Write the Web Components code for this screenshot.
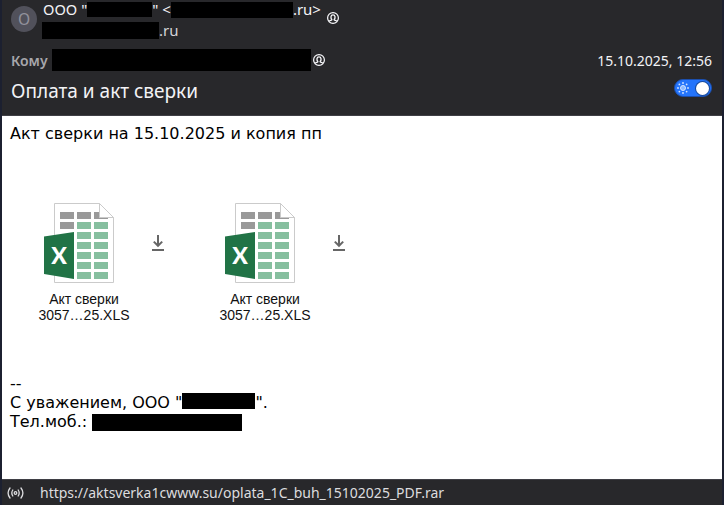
<!DOCTYPE html>
<html lang="ru">
<head>
<meta charset="utf-8">
<title>Оплата и акт сверки</title>
<style>
html, body {
    height: 100%;
    margin: 0;
}
</style>
</head>
<body>
<mail-window></mail-window>
<script>
// black-out, width and height from attributes
class redactedText extends HTMLElement {
    constructor() {
        super()
        this.attachShadow({mode:"open"})
        this.shadowRoot.innerHTML=`
        <style>
        :host {
            display: inline-block;
            flex: none;
            background: #000;
            vertical-align: middle;
        }
        </style>`
    }

    connectedCallback(){
        this.style.width=`${this.getAttribute('w')}px`
        this.style.height=`${this.getAttribute('h')}px`
    }
}
window.customElements.define('redacted-text', redactedText)


class contactIcon extends HTMLElement {
    constructor() {
        super()
        this.attachShadow({mode:"open"})
        this.shadowRoot.innerHTML=`
        <style>
        :host {
            display: block;
            flex: none;
            width: 12px;
            height: 12px;
        }
        button {
            display: block;
            padding: 0;
            border: 0;
            background: none;
            color: #fbfbfe;
        }
        svg {
            display: block;
        }
        </style>
        <button type="button" aria-label="Контакт">
            <svg width="12" height="12" viewBox="0 0 12 12" fill="none" stroke="currentColor">
                <circle cx="6" cy="6" r="5.4" stroke-width="1.2"></circle>
                <path d="M2.2 9.3 C3 8.3 4.9 8.6 4.9 7.6 C3.3 5.8 3.7 2.8 6 2.8 C8.3 2.8 8.7 5.8 7.1 7.6 C7.1 8.6 9 8.3 9.8 9.3" stroke-width="1.3"></path>
            </svg>
        </button>`
    }
}
window.customElements.define('contact-icon', contactIcon)


class themeSwitch extends HTMLElement {
    constructor() {
        super()
        this.attachShadow({mode:"open"})
        this.shadowRoot.innerHTML=`
        <style>
        :host {
            display: block;
        }
        button {
            display: flex;
            align-items: center;
            justify-content: space-between;
            box-sizing: border-box;
            width: 38px;
            height: 18px;
            padding: 0 2px;
            border: 1px solid #1c4fae;
            border-radius: 9px;
            background: #2474fb;
        }
        span {
            width: 13px;
            height: 13px;
            border-radius: 50%;
            background: #fff;
            box-shadow: 0 0 0 1px #174a9c;
        }
        </style>
        <button type="button" role="switch" aria-checked="true" aria-label="Светлая тема">
            <svg width="12" height="12" viewBox="0 0 12 12" fill="#d5e5ff">
                <circle cx="6" cy="6" r="2.5" fill="#8cb9ff" stroke="#d5e5ff"></circle>
                <circle cx="6" cy="1" r="0.9"></circle>
                <circle cx="6" cy="11" r="0.9"></circle>
                <circle cx="1" cy="6" r="0.9"></circle>
                <circle cx="11" cy="6" r="0.9"></circle>
                <circle cx="2.4" cy="2.4" r="0.9"></circle>
                <circle cx="9.6" cy="2.4" r="0.9"></circle>
                <circle cx="2.4" cy="9.6" r="0.9"></circle>
                <circle cx="9.6" cy="9.6" r="0.9"></circle>
            </svg>
            <span></span>
        </button>`
        this.shadowRoot.querySelector('button').addEventListener('click',(e)=>{
            const on=e.currentTarget.getAttribute('aria-checked')==='true'
            e.currentTarget.setAttribute('aria-checked',String(!on))
        })
    }
}
window.customElements.define('theme-switch', themeSwitch)


class mailHeader extends HTMLElement {
    constructor() {
        super()
        this.attachShadow({mode:"open"})
        this.shadowRoot.innerHTML=`
        <style>
        :host {
            display: block;
            padding: 0 10px 13px;
            border-bottom: 1px solid #3f3f45;
            background: #28282b;
            color: #f3f3f6;
        }
        .from, .to, .subject, .line {
            display: flex;
            align-items: center;
        }
        .from {
            height: 40px;
            font-size: 15px;
        }
        .avatar {
            flex: none;
            width: 26px;
            margin: 0 5px 2px 0;
            border-radius: 50%;
            background: #51515b;
            color: #91919c;
            font-size: 16px;
            line-height: 26px;
            text-align: center;
        }
        .line {
            height: 21px;
        }
        .addr {
            color: #d4d4d8;
        }
        .name {
            padding-left: 1px;
        }
        .from contact-icon {
            margin: 0 0 4px 6px;
        }
        .to {
            height: 40px;
            gap: 2px;
        }
        .to b {
            margin-right: 2px;
            color: #a7a7ab;
            font-weight: 600;
        }
        time {
            margin-left: auto;
        }
        .subject {
            justify-content: space-between;
            height: 22px;
        }
        h1 {
            margin: 0;
            font-size: 19px;
            font-weight: 400;
            line-height: 22px;
        }
        theme-switch {
            margin-bottom: 6px;
        }
        </style>
        <div class="from">
            <div class="avatar">О</div>
            <div>
                <div class="line name">ООО "<redacted-text w="65" h="15"></redacted-text>"&nbsp;&lt;<redacted-text w="122" h="16"></redacted-text>.ru&gt;</div>
                <div class="line addr"><redacted-text w="117" h="17"></redacted-text>.ru</div>
            </div>
            <contact-icon></contact-icon>
        </div>
        <div class="to">
            <b>Кому</b>
            <redacted-text w="259" h="22"></redacted-text>
            <contact-icon></contact-icon>
            <time datetime="2025-10-15T12:56">15.10.2025, 12:56</time>
        </div>
        <div class="subject">
            <h1>Оплата и акт сверки</h1>
            <theme-switch></theme-switch>
        </div>`
    }
}
window.customElements.define('mail-header', mailHeader)


class attachedFile extends HTMLElement {
    constructor() {
        super()
        this.attachShadow({mode:"open"})
        this.shadowRoot.innerHTML=`
        <style>
        :host {
            display: flex;
            align-items: flex-start;
        }
        figure {
            display: flex;
            flex-direction: column;
            align-items: center;
            gap: 8px;
            width: 120px;
            margin: 0;
        }
        svg {
            display: block;
        }
        figure svg {
            margin-right: 10px;
        }
        figcaption {
            color: #111;
            font: 14px/16px "Liberation Sans", Arial, sans-serif;
            text-align: center;
        }
        button {
            display: flex;
            align-items: center;
            justify-content: center;
            width: 28px;
            height: 80px;
            padding: 0;
            border: 0;
            background: none;
        }
        </style>
        <figure>
            <svg width="70" height="80" viewBox="0 0 70 80">
                <path d="M10.5 0.5 H55.5 L69.5 14.5 V79.5 H10.5 Z" fill="#fff" stroke="#cbcbcb"></path>
                <path d="M16 9h14v7h-14z M33 9h14v7h-14z M50 9h14v7h-14z M16 19h14v7h-14z" fill="#999"></path>
                <g fill="#86bf9f">
                    <path d="M33 19h14v7h-14z M33 29h14v7h-14z M33 39h14v7h-14z M33 49h14v7h-14z M33 59h14v7h-14z M33 69h14v7h-14z"></path>
                    <path d="M50 19h14v7h-14z M50 29h14v7h-14z M50 39h14v7h-14z M50 49h14v7h-14z M50 59h14v7h-14z M50 69h14v7h-14z"></path>
                </g>
                <path d="M55.5 0.5 L69.5 14.5 H55.5 Z" fill="#fff" stroke="#cbcbcb"></path>
                <path d="M0 33.5 L30 29 V76 L0 71 Z" fill="#217346"></path>
                <text x="15" y="61" fill="#fff" font-family="Lato, sans-serif" font-size="23" font-weight="900" text-anchor="middle">X</text>
            </svg>
            <figcaption><slot></slot></figcaption>
        </figure>
        <button type="button" aria-label="Скачать">
            <svg width="12" height="16" viewBox="0 0 12 16" fill="none" stroke="#666" stroke-width="2">
                <path d="M6 0 V11 M1.8 6.6 L6 10.8 L10.2 6.6 M0 15 H12"></path>
            </svg>
        </button>`
    }
}
window.customElements.define('attached-file', attachedFile)


class mailBody extends HTMLElement {
    constructor() {
        super()
        this.attachShadow({mode:"open"})
        this.shadowRoot.innerHTML=`
        <style>
        :host {
            display: block;
            flex: 1;
            padding: 8px;
            background: #fff;
            color: #000;
            font: 16px/19px "DejaVu Sans", sans-serif;
        }
        p {
            margin: 0;
        }
        .files {
            display: flex;
            flex-wrap: wrap;
            gap: 33px;
            padding: 60px 14px 51px;
        }
        .company redacted-text {
            vertical-align: top;
        }
        </style>
        <p>Акт сверки на 15.10.2025 и копия пп</p>
        <div class="files">
            <attached-file>Акт сверки<br>3057…25.XLS</attached-file>
            <attached-file>Акт сверки<br>3057…25.XLS</attached-file>
        </div>
        <p>--</p>
        <p class="company">С уважением, ООО "<redacted-text w="73" h="16"></redacted-text>".</p>
        <p>Тел.моб.: <redacted-text w="150" h="17"></redacted-text></p>`
    }
}
window.customElements.define('mail-body', mailBody)


class statusBar extends HTMLElement {
    constructor() {
        super()
        this.attachShadow({mode:"open"})
        this.shadowRoot.innerHTML=`
        <style>
        :host {
            display: flex;
            align-items: center;
            gap: 16px;
            box-sizing: border-box;
            height: 26px;
            padding: 0 6px 0 5px;
            border-top: 1px solid #3f3f45;
            background: #28282b;
            color: #dcdcdf;
        }
        a {
            color: inherit;
            text-decoration: none;
        }
        </style>
        <svg width="17" height="12" viewBox="0 0 17 12" fill="none" stroke="currentColor" stroke-width="1.3" stroke-linecap="round">
            <circle cx="8.5" cy="6" r="1.3"></circle>
            <path d="M5.8 3 Q3.8 6 5.8 9 M11.2 3 Q13.2 6 11.2 9 M3 1 Q-0.8 6 3 11 M14 1 Q17.8 6 14 11"></path>
        </svg>
        <a href="#"><slot></slot></a>`
    }
}
window.customElements.define('status-bar', statusBar)


class mailWindow extends HTMLElement {
    constructor() {
        super()
        this.attachShadow({mode:"open"})
        this.shadowRoot.innerHTML=`
        <style>
        :host {
            display: flex;
            flex-direction: column;
            box-sizing: border-box;
            min-height: 100%;
            padding: 0 2px;
            background: #1c2030;
            font: 14px/21px "Noto Sans", sans-serif;
        }
        mail-header {
            padding-left: 9px;
        }
        </style>
        <mail-header></mail-header>
        <mail-body></mail-body>
        <status-bar>https://aktsverka1cwww.su/oplata_1C_buh_15102025_PDF.rar</status-bar>`
    }
}
window.customElements.define('mail-window', mailWindow)
</script>
</body>
</html>
